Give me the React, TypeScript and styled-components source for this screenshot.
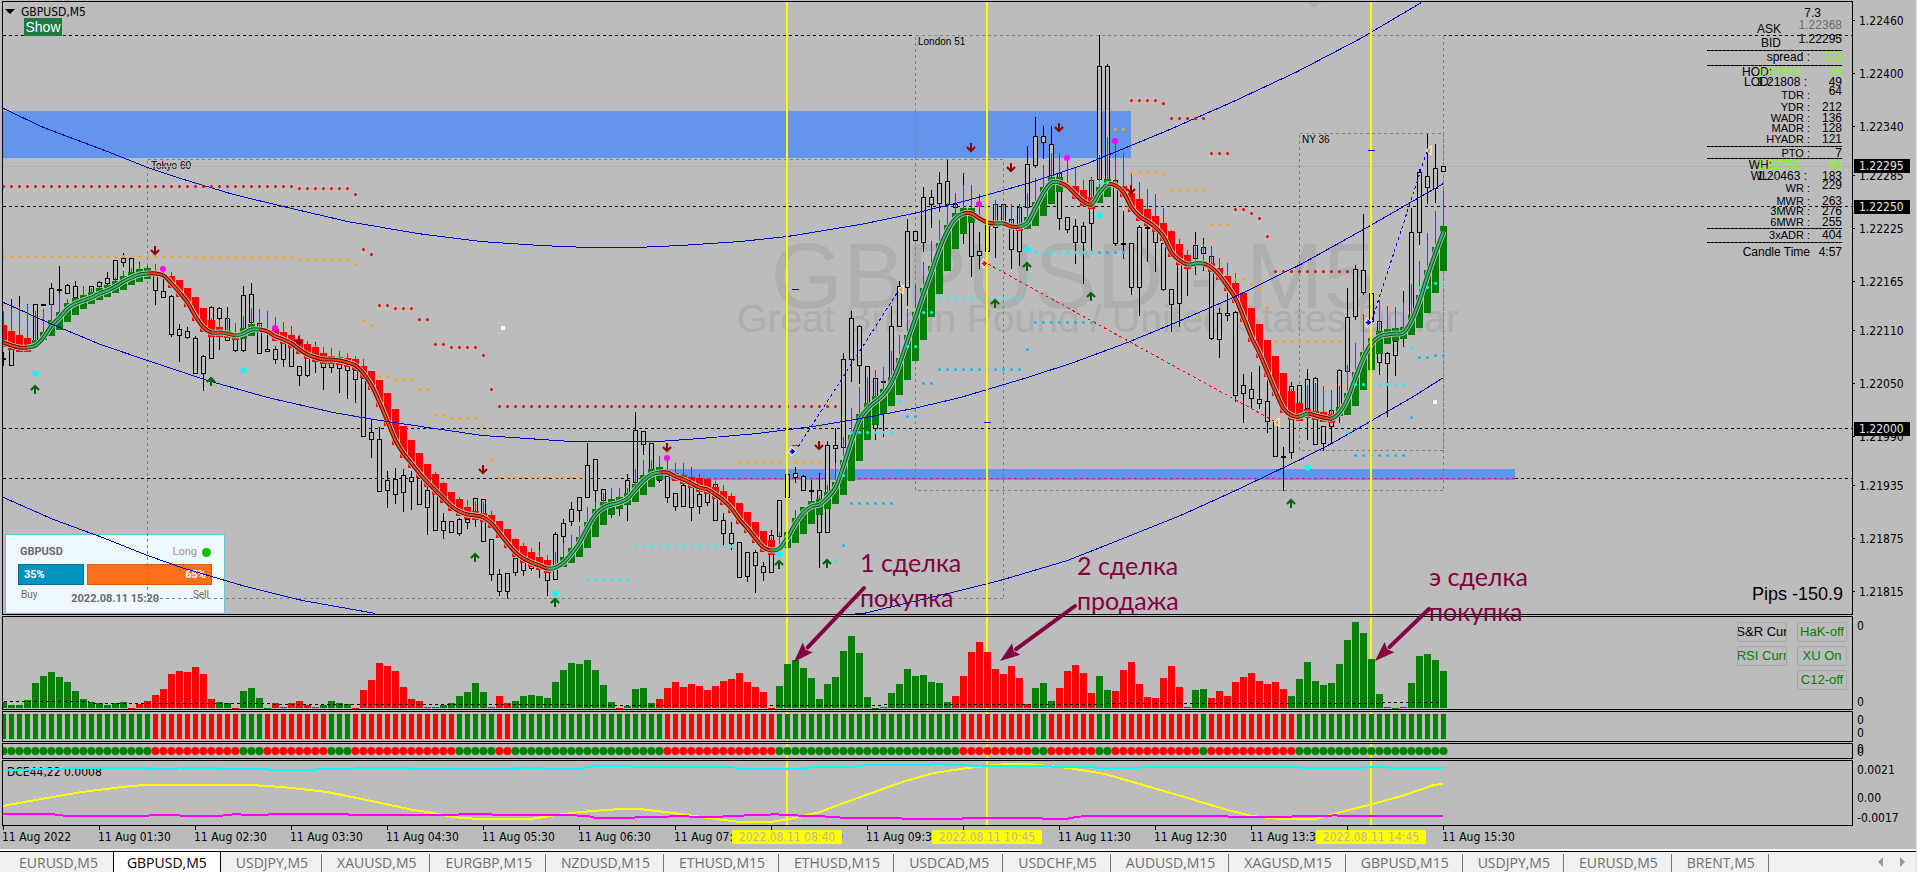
import React from "react";
import styled, { createGlobalStyle, css } from "styled-components";

const BG = "#bcbcbc";
const GREEN = "#008000";
const RED = "#ff0000";
const UI_FONT = '"DejaVu Sans Condensed", "Noto Sans", sans-serif';
const LABEL_FONT = '"Liberation Sans", Arial, sans-serif';

const GlobalStyle = createGlobalStyle`
  * { box-sizing: border-box; }
  body { margin: 0; background: ${BG}; font-family: ${LABEL_FONT}; color: #000; }
`;

/* ---------- data ---------- */

const STEP = 8;
const FIRST = 3;
const xAt = (i: number) => FIRST + i * STEP;

// high, open/close top, open/close bottom, low, trend wick top, direction, trend body edge (0 = none), average
type Bar = [number, number, number, number, number, 1 | -1, number, number];
const BARS: Bar[] = [
  [352, 358, 358, 366, 311, -1, 325, 342], [299, 349, 365, 365, 309, -1, 331, 345], [296, 335, 345, 351, 307, -1, 335, 347],
  [304, 340, 345, 349, 305, -1, 338, 347], [304, 304, 342, 342, 311, 1, 347, 345], [304, 304, 304, 304, 309, 1, 340, 337],
  [283, 288, 304, 304, 304, 1, 336, 325], [266, 289, 289, 293, 293, 1, 330, 317], [284, 285, 293, 293, 299, 1, 322, 308],
  [281, 286, 297, 297, 297, 1, 315, 303], [300, 300, 301, 301, 286, 1, 309, 300], [286, 286, 293, 293, 288, 1, 304, 297],
  [281, 282, 286, 289, 287, 1, 300, 293], [272, 278, 283, 285, 286, 1, 297, 290], [260, 260, 279, 279, 277, 1, 293, 286],
  [253, 258, 262, 267, 271, 1, 290, 281], [258, 258, 274, 274, 268, 1, 285, 277], [262, 269, 271, 275, 263, 1, 282, 274],
  [266, 268, 271, 271, 267, 1, 279, 273], [275, 275, 290, 305, 264, 1, 0, 273], [277, 291, 297, 298, 272, -1, 0, 275],
  [295, 296, 334, 337, 272, -1, 276, 283], [324, 329, 335, 362, 280, -1, 280, 292], [327, 331, 337, 339, 288, -1, 288, 302],
  [336, 338, 373, 374, 297, -1, 297, 316], [355, 356, 373, 391, 308, -1, 308, 327], [306, 307, 358, 358, 318, -1, 320, 332],
  [307, 308, 318, 350, 320, -1, 327, 332], [307, 318, 340, 340, 318, -1, 331, 333], [339, 339, 350, 352, 323, -1, 333, 335],
  [286, 295, 350, 352, 316, 1, 339, 333], [283, 294, 322, 322, 308, 1, 336, 329], [323, 323, 353, 354, 309, 1, 0, 329],
  [335, 349, 351, 351, 311, -1, 0, 331], [346, 349, 359, 364, 317, -1, 329, 336], [343, 343, 359, 367, 322, -1, 332, 339],
  [344, 344, 366, 366, 326, -1, 335, 343], [366, 366, 375, 386, 335, -1, 339, 349], [357, 358, 375, 377, 341, -1, 344, 354],
  [342, 350, 355, 373, 343, -1, 347, 357], [360, 360, 367, 390, 347, -1, 353, 359], [362, 362, 367, 373, 348, -1, 356, 359],
  [362, 362, 368, 393, 351, -1, 357, 360], [366, 366, 370, 399, 353, -1, 358, 362], [356, 370, 379, 403, 356, -1, 359, 365],
  [378, 378, 436, 437, 359, -1, 366, 373], [419, 432, 439, 458, 371, -1, 371, 385], [427, 439, 491, 492, 380, -1, 380, 402],
  [471, 480, 490, 508, 393, -1, 393, 421], [468, 479, 494, 504, 409, -1, 409, 440], [469, 475, 492, 512, 426, -1, 426, 453],
  [471, 477, 481, 510, 440, -1, 440, 463], [476, 478, 504, 504, 453, -1, 453, 473], [480, 490, 507, 535, 464, -1, 464, 482],
  [492, 492, 530, 531, 472, -1, 474, 490], [513, 521, 530, 539, 482, -1, 483, 498], [521, 521, 532, 532, 492, -1, 492, 506],
  [518, 519, 533, 536, 497, -1, 499, 511], [518, 519, 522, 529, 500, -1, 507, 514], [498, 498, 517, 527, 501, -1, 511, 515],
  [499, 499, 541, 541, 502, -1, 513, 517], [539, 539, 574, 581, 511, -1, 515, 523], [569, 574, 591, 596, 521, -1, 521, 533],
  [573, 573, 591, 599, 529, -1, 529, 543], [558, 558, 572, 576, 538, -1, 539, 552], [562, 562, 570, 576, 543, -1, 546, 558],
  [564, 564, 568, 571, 548, -1, 552, 562], [542, 564, 569, 578, 550, -1, 557, 565], [572, 572, 580, 596, 555, -1, 560, 568],
  [532, 534, 579, 579, 552, -1, 0, 567], [519, 523, 536, 544, 543, 1, 567, 562], [502, 509, 521, 526, 535, 1, 563, 553],
  [497, 497, 510, 522, 526, 1, 557, 542], [443, 465, 497, 497, 507, 1, 548, 527], [459, 459, 490, 503, 502, 1, 537, 514],
  [489, 489, 500, 500, 493, 1, 525, 507], [499, 499, 500, 518, 488, 1, 515, 504], [499, 499, 500, 516, 488, 1, 509, 502],
  [474, 480, 498, 521, 488, 1, 505, 498], [412, 430, 482, 482, 469, 1, 502, 489], [431, 431, 444, 455, 460, 1, 495, 480],
  [443, 443, 469, 469, 460, 1, 487, 474], [468, 468, 480, 483, 456, 1, 480, 472], [476, 476, 497, 503, 457, 1, 0, 472],
  [493, 493, 506, 511, 463, -1, 473, 476], [483, 485, 506, 506, 463, -1, 475, 479], [484, 484, 507, 521, 467, -1, 477, 483],
  [492, 494, 506, 514, 474, -1, 478, 487], [482, 483, 502, 506, 478, -1, 479, 489], [483, 484, 520, 521, 481, -1, 487, 494],
  [513, 520, 533, 546, 485, -1, 491, 500], [522, 533, 543, 550, 493, -1, 496, 508], [542, 542, 577, 578, 503, -1, 503, 519],
  [552, 552, 576, 582, 512, -1, 512, 528], [550, 552, 565, 593, 522, -1, 522, 538], [562, 566, 572, 581, 531, -1, 531, 547],
  [530, 535, 572, 572, 537, -1, 540, 550], [500, 500, 536, 540, 532, -1, 0, 548], [474, 474, 497, 497, 523, 1, 548, 537],
  [467, 473, 477, 483, 510, 1, 543, 523], [475, 476, 490, 491, 509, 1, 534, 512], [480, 490, 490, 502, 502, 1, 524, 506],
  [473, 490, 532, 568, 495, 1, 515, 504], [441, 445, 532, 532, 485, 1, 509, 497], [428, 445, 448, 473, 463, 1, 504, 487],
  [353, 359, 447, 447, 437, 1, 495, 465], [311, 318, 359, 382, 408, 1, 481, 440], [325, 326, 365, 384, 387, 1, 461, 419],
  [366, 366, 413, 413, 377, 1, 440, 408], [378, 378, 428, 440, 370, 1, 425, 401], [380, 381, 381, 437, 367, 1, 414, 394],
  [306, 326, 380, 380, 351, 1, 406, 382], [281, 286, 326, 326, 335, 1, 395, 363], [219, 231, 287, 306, 309, 1, 380, 340],
  [231, 231, 240, 240, 285, 1, 361, 317], [187, 197, 242, 252, 262, 1, 340, 293], [190, 197, 204, 228, 241, 1, 317, 271],
  [172, 183, 203, 212, 220, 1, 294, 248], [160, 181, 204, 204, 203, 1, 271, 230], [204, 204, 207, 210, 193, 1, 249, 218],
  [173, 209, 213, 244, 185, 1, 234, 213], [217, 217, 256, 277, 185, 1, 223, 213], [232, 251, 255, 269, 194, -1, 0, 218],
  [220, 220, 251, 251, 215, -1, 0, 222], [204, 204, 227, 258, 200, -1, 0, 223], [204, 204, 225, 225, 204, -1, 0, 223],
  [219, 219, 249, 269, 204, -1, 0, 226], [204, 207, 251, 266, 205, -1, 226, 226], [146, 164, 207, 207, 193, 1, 229, 222],
  [117, 136, 165, 168, 178, 1, 226, 207], [126, 136, 142, 159, 165, 1, 216, 192], [126, 144, 175, 175, 153, 1, 204, 182],
  [173, 173, 218, 230, 153, 1, 192, 182], [217, 217, 229, 233, 161, 1, 0, 186], [219, 226, 242, 264, 168, -1, 186, 194],
  [222, 226, 242, 284, 180, -1, 190, 201], [177, 180, 223, 251, 178, -1, 197, 204], [35, 66, 179, 179, 155, 1, 203, 192],
  [64, 66, 180, 180, 137, 1, 197, 184], [180, 180, 243, 246, 143, 1, 0, 185], [211, 243, 243, 259, 153, -1, 186, 192],
  [243, 243, 287, 295, 172, -1, 193, 207], [225, 227, 287, 316, 182, -1, 199, 216], [225, 227, 227, 262, 189, -1, 209, 221],
  [227, 227, 242, 272, 194, -1, 216, 227], [243, 243, 289, 291, 208, -1, 223, 236], [289, 289, 304, 332, 230, -1, 231, 252],
  [263, 263, 303, 327, 239, -1, 244, 260], [266, 266, 268, 296, 250, -1, 255, 264], [232, 245, 258, 275, 244, -1, 0, 263],
  [238, 247, 253, 271, 244, 1, 0, 263], [256, 256, 338, 340, 246, -1, 263, 267], [308, 313, 339, 358, 258, -1, 268, 275],
  [293, 313, 315, 321, 263, -1, 276, 286], [311, 312, 395, 402, 273, -1, 283, 298], [374, 385, 393, 423, 293, -1, 293, 317],
  [372, 389, 398, 409, 308, -1, 308, 337], [366, 399, 403, 409, 324, -1, 324, 353], [379, 401, 421, 433, 340, -1, 340, 372],
  [422, 422, 456, 456, 356, -1, 356, 391], [447, 456, 456, 491, 373, -1, 373, 408], [382, 386, 452, 459, 389, -1, 391, 415],
  [385, 385, 413, 413, 401, -1, 403, 416], [369, 379, 408, 440, 385, -1, 409, 413], [377, 378, 444, 444, 383, -1, 411, 415],
  [426, 426, 443, 451, 386, -1, 412, 417], [410, 410, 426, 444, 390, -1, 414, 418], [369, 370, 413, 423, 386, 1, 416, 412],
  [288, 317, 371, 371, 365, 1, 415, 398], [265, 269, 316, 320, 343, 1, 406, 377], [214, 270, 292, 295, 314, 1, 390, 357],
  [293, 293, 321, 321, 337, 1, 370, 343], [321, 321, 362, 375, 300, 1, 354, 336], [352, 353, 363, 417, 306, 1, 344, 334],
  [341, 341, 355, 376, 307, 1, 341, 333], [291, 330, 336, 347, 302, 1, 339, 332], [208, 232, 317, 317, 284, 1, 335, 320],
  [169, 172, 232, 245, 261, 1, 328, 300], [134, 176, 187, 204, 233, 1, 313, 275], [144, 168, 188, 203, 211, 1, 293, 252],
  [166, 166, 171, 171, 191, 1, 271, 231],
];

// [first bar, last bar, rising]
const AVERAGE_RUNS: [number, number, boolean][] = [
  [0, 3, false], [3, 18, true], [18, 26, false], [26, 29, false], [29, 32, true], [32, 68, false], [68, 82, true],
  [82, 96, false], [96, 120, true], [120, 124, false], [124, 125, true], [125, 127, false], [127, 132, true],
  [132, 136, false], [136, 138, true], [138, 148, false], [148, 150, true], [150, 162, false], [162, 163, true],
  [163, 166, false], [166, 180, true],
];

// [first bar, last bar, y]
type Dots = [number, number, number][];
const RED_DOTS: Dots = [
  [0, 36, 186], [37, 43, 188], [44, 44, 194], [45, 45, 249], [46, 46, 254], [47, 48, 305], [49, 51, 308], [52, 53, 319],
  [54, 55, 344], [56, 59, 347], [60, 60, 355], [61, 61, 389], [62, 104, 406], [141, 144, 100], [145, 145, 103],
  [146, 150, 118], [151, 153, 153], [154, 155, 209], [156, 156, 213], [157, 157, 218], [158, 158, 236], [159, 168, 271],
];
const ORANGE_DOTS: Dots = [
  [0, 23, 256], [24, 36, 257], [37, 43, 259], [44, 44, 264], [45, 45, 320], [46, 46, 325], [47, 48, 376], [49, 51, 379],
  [52, 53, 389], [54, 55, 415], [56, 59, 418], [60, 60, 426], [61, 61, 459], [62, 72, 477], [92, 102, 462],
  [139, 140, 129], [141, 144, 172], [145, 145, 174], [146, 150, 190], [151, 153, 224], [154, 155, 279], [156, 156, 284],
  [157, 157, 288], [158, 158, 307], [159, 167, 341],
];
const CYAN_DOTS: Dots = [
  [73, 78, 579], [79, 91, 546], [103, 104, 560], [105, 105, 475], [106, 111, 432], [112, 112, 401], [113, 114, 346],
  [115, 116, 312], [117, 127, 298], [128, 128, 278], [129, 136, 252], [137, 138, 182], [168, 168, 432], [169, 175, 384],
  [176, 176, 347], [177, 178, 287], [179, 180, 283],
];
const SKY_DOTS: Dots = [
  [105, 105, 545], [106, 111, 503], [112, 112, 471], [113, 114, 416], [115, 116, 383], [117, 127, 369], [128, 128, 349],
  [129, 136, 322], [137, 140, 252], [169, 175, 455], [176, 176, 417], [177, 178, 357], [179, 180, 355],
];

type Pt = [number, number];
const CYAN_MARKS: Pt[] = [[35, 373], [243, 370], [555, 593], [779, 554], [1027, 249], [1099, 215], [1307, 467]];
const MAGENTA_MARKS: Pt[] = [[163, 269], [275, 328], [667, 458], [979, 204], [1067, 158], [1115, 141]];
const DOWN_ARROWS: Pt[] = [[155, 250], [299, 340], [483, 469], [667, 447], [819, 445], [971, 147], [1011, 167], [1059, 127], [1131, 189]];
const UP_ARROWS: Pt[] = [[35, 389], [211, 381], [475, 557], [555, 602], [779, 564], [827, 563], [1027, 266], [995, 303], [1091, 296], [1291, 503]];

const BANDS: Pt[][] = [
  [[3, 108], [43, 127], [75, 139], [107, 151], [147, 167], [180, 178], [233, 194], [287, 207], [347, 221], [417, 233], [480, 241], [540, 245], [587, 247], [635, 247], [680, 245], [740, 241], [787, 236], [860, 224], [913, 213], [963, 201], [1027, 183], [1087, 163], [1167, 130], [1233, 101], [1297, 71], [1360, 38], [1421, 2]],
  [[3, 302], [52, 324], [100, 344], [147, 360], [207, 380], [267, 397], [333, 412], [373, 419], [434, 428], [482, 435], [571, 441], [657, 441], [700, 438], [757, 433], [813, 426], [860, 418], [913, 408], [960, 397], [1027, 377], [1073, 362], [1127, 342], [1173, 323], [1233, 297], [1300, 264], [1363, 229], [1443, 183]],
  [[3, 497], [53, 519], [102, 537], [147, 555], [184, 568], [245, 586], [302, 600], [375, 613]],
  [[847, 614], [863, 613], [913, 601], [960, 590], [1003, 579], [1067, 560], [1120, 539], [1180, 515], [1233, 491], [1300, 459], [1333, 442], [1380, 415], [1413, 396], [1443, 377]],
];

const HIST: number[] = [
  6, 3, 3, 8, 25, 32, 36, 31, 26, 17, 9, 6, 5, 3, 5, 6, -1, 4, 7, 13, 19, 34, 37, 36, 41, 34, 9, 6, 5, -1,
  17, 20, 10, -1, 5, 1, 5, 7, 3, 1, 3, 7, 5, 4, -1, 18, 28, 45, 42, 37, 21, 9, 7, 1, 1, 3, 5, 12, 16, 25,
  16, 1, 12, 5, 7, 12, 13, 12, 10, 26, 38, 45, 44, 48, 38, 23, 6, -1, 2, 19, 20, 5, 9, 20, 26, 21, 24, 22, 18, 22,
  27, 29, 35, 26, 21, 16, -1, 22, 44, 48, 40, 30, 9, 24, 31, 57, 72, 55, 11, -1, 1, 15, 24, 39, 32, 33, 26, 25, 6, 12,
  32, 56, 66, 56, 39, 34, 42, 30, 4, 20, 25, 7, 20, 37, 43, 35, 15, 32, 18, 17, 38, 46, 24, 11, 10, 30, 42, 21, 1, 18,
  19, 10, 17, 12, 26, 31, 35, 27, 24, 26, 19, 12, 29, 46, 27, 23, 25, 44, 68, 86, 75, 49, 14, 1, -1, 1, 25, 52, 54, 48, 37,
];
const HIST_RED: Pt[] = [[16, 26], [29, 29], [34, 38], [44, 52], [54, 54], [62, 63], [77, 77], [82, 96], [110, 110], [119, 128], [132, 136], [139, 147], [151, 160]];
const STATE_RED: Pt[] = [[19, 29], [33, 40], [44, 56], [62, 63], [83, 96], [120, 128], [131, 136], [139, 149], [151, 161]];
const inRuns = (runs: Pt[], i: number) => runs.some(([a, b]) => i >= a && i <= b);

const HIST_AVG: Pt[] = [[3, 701], [88, 701], [90, 703], [270, 703], [275, 704], [570, 704], [575, 705], [880, 705], [885, 704], [1100, 704], [1105, 703], [1380, 703], [1385, 702], [1440, 702]];
const DCE_CYAN: Pt[] = [[3, 770], [61, 769], [68, 768], [145, 768], [149, 769], [176, 769], [182, 768], [216, 768], [222, 769], [265, 769], [270, 770], [314, 770], [318, 769], [388, 768], [408, 768], [414, 769], [514, 769], [520, 768], [539, 768], [545, 769], [580, 769], [588, 767], [596, 766], [624, 766], [640, 767], [732, 767], [740, 769], [803, 769], [813, 767], [850, 767], [869, 765], [926, 765], [934, 764], [958, 765], [983, 766], [1044, 766], [1060, 767], [1093, 767], [1097, 768], [1140, 768], [1142, 767], [1298, 767], [1300, 768], [1363, 768], [1365, 767], [1387, 767], [1388, 768], [1443, 768]];
const DCE_YELLOW: Pt[] = [[3, 806], [41, 799], [82, 792], [122, 787], [143, 785], [251, 785], [282, 787], [327, 792], [367, 800], [408, 809], [433, 813], [453, 817], [478, 819], [531, 819], [563, 814], [592, 811], [620, 809], [640, 809], [673, 813], [701, 817], [740, 822], [771, 822], [795, 818], [820, 812], [844, 803], [877, 791], [905, 781], [934, 773], [967, 768], [995, 765], [1007, 764], [1028, 764], [1069, 768], [1105, 774], [1150, 787], [1191, 799], [1224, 809], [1252, 816], [1280, 819], [1315, 819], [1341, 812], [1369, 805], [1402, 796], [1434, 785], [1443, 784]];
const DCE_MAGENTA: Pt[] = [[3, 814], [51, 814], [67, 816], [147, 816], [151, 815], [178, 815], [182, 816], [218, 816], [237, 814], [245, 815], [267, 815], [270, 814], [347, 814], [350, 815], [457, 815], [461, 814], [490, 814], [494, 815], [566, 815], [588, 816], [596, 818], [630, 818], [640, 817], [667, 817], [671, 816], [707, 817], [740, 816], [748, 815], [768, 815], [774, 814], [784, 815], [838, 817], [842, 818], [900, 818], [904, 819], [960, 819], [965, 818], [1040, 818], [1045, 819], [1066, 819], [1076, 817], [1086, 816], [1226, 816], [1230, 817], [1290, 817], [1294, 816], [1330, 816], [1334, 815], [1340, 816], [1443, 816]];

const DEAL_TIMES = [786, 986, 1370];

const SCALE: [string, number][] = [
  ["1.22460", 20], ["1.22400", 73], ["1.22340", 126], ["1.22285", 175], ["1.22225", 228], ["1.22165", 281], ["1.22110", 330],
  ["1.22050", 383], ["1.21990", 436], ["1.21935", 485], ["1.21875", 538], ["1.21815", 591],
];
const LEVELS: [string, number][] = [["1.22295", 159], ["1.22250", 200], ["1.22000", 422]];

// text, centre y, distance from the right edge, colour
const NAMES: [string, number, number?, string?][] = [
  ["ASK", 29, 71], ["BID", 43, 71], ["spread :", 57], ["HOD:", 72, 80], ["1.22443 :", 72, 45, "#7fff00"], ["LOD:", 82, 80],
  ["1.21808 :", 82, 45], ["TDR :", 95], ["YDR :", 107], ["WADR :", 118], ["MADR :", 128], ["HYADR :", 139], ["PTO :", 153],
  ["WH:", 165, 80], ["1.22752 :", 165, 45, "#7fff00"], ["WL:", 176, 80], ["1.20463 :", 176, 45], ["WR :", 188], ["MWR :", 201],
  ["3MWR :", 211], ["6MWR :", 222], ["3xADR :", 235], ["Candle Time", 252],
];
const VALUES: [string, number, number?, string?][] = [
  ["7.3", 13, 31], ["1.22368", 25, 10, "#6a6a6a"], ["1.22295", 39], ["7.3", 57, 10, "#7fff00"], ["15", 72, 10, "#7fff00"], ["49", 82],
  ["64", 91], ["212", 107], ["136", 118], ["128", 128], ["121", 139], ["7", 153], ["46", 165, 10, "#7fff00"], ["183", 176],
  ["229", 185], ["263", 201], ["276", 211], ["255", 222], ["404", 235], ["4:57", 252],
];
const RULES = [50, 65, 146, 158, 228, 242];

const HOURS = ["2022", "01:30", "02:30", "03:30", "04:30", "05:30", "06:30", "07:30", "08:30", "09:30", "10:30", "11:30", "12:30", "13:30", "14:30", "15:30"];
const TIME_BADGES: [string, number][] = [["2022.08.11 08:40", 732], ["2022.08.11 10:45", 932], ["2022.08.11 14:45", 1316]];

const TABS = ["EURUSD,M5", "GBPUSD,M5", "USDJPY,M5", "XAUUSD,M5", "EURGBP,M15", "NZDUSD,M15", "ETHUSD,M15", "ETHUSD,M15", "USDCAD,M5", "USDCHF,M5", "AUDUSD,M15", "XAGUSD,M15", "GBPUSD,M15", "USDJPY,M5", "EURUSD,M5", "BRENT,M5"];

/* ---------- layout ---------- */

const Window = styled.main`
  display: flex;
  flex-direction: column;
  min-height: 100vh;
  background: ${BG};
  border-right: 1px solid #dcdcdc;
  overflow: hidden;
`;

const Workspace = styled.section`
  position: relative;
  flex: 1;
  display: flex;
  flex-direction: column;
  gap: 1px;
  padding: 1px 0 0 2px;
`;

const PaneRow = styled.div`
  display: grid;
  grid-template-columns: minmax(0, 1fr) 63px;
`;

const Plot = styled.div<{ $height: number }>`
  position: relative;
  border: 1px solid #000;
  height: ${(p) => p.$height}px;
  overflow: hidden;
`;

const Canvas = styled.svg`
  display: block;
  width: 100%;
  height: 100%;
  position: relative;
  pointer-events: none;
`;

const Scale = styled.svg`
  display: block;
  width: 100%;
  height: 0;
  min-height: 100%;
  overflow: visible;
  font: 12px ${UI_FONT};
`;

const PlotTitle = styled.h1`
  position: absolute;
  left: 2px;
  top: 2px;
  margin: 0;
  display: flex;
  align-items: center;
  gap: 6px;
  font: 12px/16px ${UI_FONT};
`;

const ShowButton = styled.button`
  position: absolute;
  left: 21px;
  top: 16px;
  width: 38px;
  height: 18px;
  padding: 0;
  border: 0;
  background: #1c7a43;
  color: #fff;
  font: 14px/18px ${LABEL_FONT};
`;

const ChartLabel = styled.span<{ $top: number; $right: number; $color?: string; $size?: number }>`
  position: absolute;
  top: ${(p) => p.$top}px;
  right: ${(p) => p.$right}px;
  color: ${(p) => p.$color ?? "#000"};
  font: ${(p) => p.$size ?? 12}px/14px ${LABEL_FONT};
  white-space: pre;
`;

const Rule = styled.hr<{ $top: number }>`
  position: absolute;
  top: ${(p) => p.$top}px;
  right: 10px;
  width: 135px;
  height: 1px;
  margin: 0;
  border: 0;
  background: repeating-linear-gradient(90deg, #000 0 3px, #5a4a3a 3px 4px);
`;

const SwitchGrid = styled.div`
  position: absolute;
  top: 5px;
  right: 5px;
  display: grid;
  grid-template-columns: 50px 50px;
  gap: 4px 10px;
`;

const SwitchButton = styled.button<{ $dark?: boolean; $second?: boolean }>`
  height: 20px;
  padding: 0;
  display: flex;
  justify-content: center;
  border: 1px solid #a6a6a6;
  border-radius: 2px;
  background: ${BG};
  color: ${(p) => (p.$dark ? "#000" : GREEN)};
  font: 13px/18px ${LABEL_FONT};
  white-space: nowrap;
  overflow: hidden;
  ${(p) => p.$second && css`grid-column: 2;`}
`;

/* ---------- sentiment card ---------- */

const Card = styled.aside`
  position: absolute;
  left: 2px;
  bottom: 0;
  width: 220px;
  height: 80px;
  padding: 10px 12px 0;
  border: 1px solid #58cbe6;
  background: #eef8ff;
  color: #6a6a6a;
  font: 11px/14px Roboto, sans-serif;
`;
const CardRow = styled.div`
  display: flex;
  justify-content: space-between;
  align-items: center;
`;
const CardName = styled.strong`
  padding-left: 2px;
  font-weight: 700;
`;
const Bias = styled.span`
  display: flex;
  align-items: center;
  gap: 5px;
  padding-right: 1px;
  color: #a8a8a8;
  font-weight: 500;
  &::after {
    content: "";
    width: 9px;
    height: 9px;
    border-radius: 50%;
    background: #00c000;
  }
`;
const Gauge = styled.div`
  display: grid;
  grid-template-columns: 35fr 66fr;
  gap: 3px;
  margin-top: 5px;
`;
const Share = styled.span<{ $sell?: boolean }>`
  height: 21px;
  padding: 0 5px;
  border: 1px solid ${(p) => (p.$sell ? "#d9590c" : "#00709a")};
  background: ${(p) => (p.$sell ? "#ff6f1a" : "#0092c0")};
  color: #fff;
  font-weight: 700;
  line-height: 19px;
  text-align: ${(p) => (p.$sell ? "right" : "left")};
`;
const CardFoot = styled(CardRow)`
  align-items: flex-start;
  padding: 3px 3px 0;
  font-size: 10px;
`;
const CardDate = styled.time`
  padding-top: 4px;
  font: 700 11px/14px Roboto, sans-serif;
`;

/* ---------- time axis and tabs ---------- */

const TimeAxis = styled.div`
  position: relative;
  display: flex;
  flex: none;
  height: 22px;
  margin-top: -1px;
  overflow: hidden;
  font: 12px/22px ${UI_FONT};
`;
const Hour = styled.span`
  flex: 0 0 96px;
  white-space: nowrap;
  background: linear-gradient(#000, #000) 1px 0 / 1px 4px no-repeat;
`;
const TimeBadge = styled.time<{ $left: number }>`
  position: absolute;
  left: ${(p) => p.$left - 2}px;
  top: 4px;
  width: 110px;
  height: 14px;
  background: #ffff00;
  color: #b9b994;
  line-height: 14px;
  text-align: center;
`;

const TabBar = styled.nav`
  display: flex;
  flex: none;
  align-items: center;
  gap: 1px;
  height: 23px;
  background: #f0f0f0;
  border-top: 2px solid #fafafa;
  box-shadow: inset 0 1px 0 #000;
  padding-left: 5px;
  overflow: hidden;
  font: 14px/22px "Open Sans", "Noto Sans", sans-serif;
`;
const Tab = styled.a<{ $active?: boolean; $divided?: boolean }>`
  height: 20px;
  margin-top: 1px;
  padding: 0 14px;
  position: relative;
  color: #6d6d6d;
  text-decoration: none;
  white-space: nowrap;
  ${(p) =>
    p.$divided &&
    css`
      &::after {
        content: "";
        position: absolute;
        right: 0;
        top: 2px;
        width: 1px;
        height: 18px;
        background: #777;
      }
    `}
  ${(p) =>
    p.$active &&
    css`
      padding: 0 13px;
      background: #fff;
      color: #000;
      border-left: 1px solid #000;
      border-right: 1px solid #000;
    `}
`;
const TabScroll = styled.div`
  margin-left: auto;
  display: flex;
  gap: 14px;
  padding-right: 8px;
`;
const ScrollButton = styled.button`
  width: 8px;
  height: 20px;
  padding: 0;
  border: 0;
  background: none;
  display: flex;
  align-items: center;
`;

const Notes = styled.svg`
  position: absolute;
  inset: 0;
  width: 100%;
  height: 100%;
  pointer-events: none;
  overflow: visible;
`;

/* ---------- drawing pieces ---------- */

const poly = (pts: Pt[]) => pts.map((p) => p.join(",")).join(" ");

const DotRuns = ({ runs, color }: { runs: Dots; color: string }) => (
  <g fill={color}>
    {runs.flatMap(([a, b, y]) =>
      Array.from({ length: b - a + 1 }, (_, k) => <circle key={`${a}-${k}-${y}`} cx={xAt(a + k) + 0.5} cy={y + 0.5} r={1.5} />),
    )}
  </g>
);

const DealLines = ({ from, to }: { from: number; to: number }) => (
  <g fill="#ffff00">
    {DEAL_TIMES.map((x) => (
      <rect key={x} x={x} y={from} width={2} height={to - from} />
    ))}
  </g>
);

const SessionBox = ({ x, y, right, bottom }: { x: number; y: number; right: number; bottom: number }) => (
  <rect x={x + 0.5} y={y + 0.5} width={right - x} height={bottom - y} fill="none" stroke="#808080" strokeDasharray="3 3" shapeRendering="crispEdges" />
);

const Candles = () => (
  <g shapeRendering="crispEdges">
    {BARS.map(([hi, top, bot, lo], i) => {
      const x = xAt(i);
      return (
        <g key={i}>
          <rect x={x} y={hi} width={1} height={Math.max(lo - hi, 1)} />
          {bot - top < 2 ? (
            <rect x={x - 2} y={top} width={5} height={2} />
          ) : (
            <rect x={x - 1.5} y={top + 0.5} width={4} height={bot - top} fill={BG} stroke="#000" />
          )}
        </g>
      );
    })}
  </g>
);

const TrendBars = () => (
  <g shapeRendering="crispEdges">
    {BARS.map(([, , , , wick, dir, edge, avg], i) => {
      const top = dir > 0 ? avg - 5 : edge;
      const bottom = dir > 0 ? edge : avg + 5;
      return (
        <g key={i} fill={dir > 0 ? GREEN : RED}>
          <rect x={xAt(i)} y={wick} width={1} height={Math.max(avg - wick, 1)} />
          {edge > 0 && <rect x={xAt(i) - 3} y={top} width={7} height={Math.max(bottom - top, 1)} />}
        </g>
      );
    })}
  </g>
);

const smooth = (a: number, b: number) => {
  const p = (i: number): Pt => {
    const k = Math.min(Math.max(i, 0), BARS.length - 1);
    return [xAt(k) + 0.5, BARS[k][7] + 0.5];
  };
  let d = `M${p(a).join(",")}`;
  for (let i = a; i < b; i++) {
    const [x0, y0] = p(i - 1);
    const [x1, y1] = p(i);
    const [x2, y2] = p(i + 1);
    const [x3, y3] = p(i + 2);
    d += ` C${x1 + (x2 - x0) / 6},${y1 + (y2 - y0) / 6} ${x2 - (x3 - x1) / 6},${y2 - (y3 - y1) / 6} ${x2},${y2}`;
  }
  return d;
};

const Average = () => (
  <g fill="none" strokeLinejoin="round">
    <path d={smooth(0, BARS.length - 1)} stroke={BG} strokeWidth={6} />
    {AVERAGE_RUNS.map(([a, b, up]) => (
      <path key={a} d={smooth(a, b)} stroke={up || a === 26 ? "#005a1c" : "#5c0000"} strokeWidth={4} />
    ))}
    {AVERAGE_RUNS.map(([a, b, up]) => (
      <path key={a} d={smooth(a, b)} stroke={up ? "#3cb371" : "#ff4500"} strokeWidth={2} />
    ))}
  </g>
);

const DownArrow = ({ at: [x, y] }: { at: Pt }) => (
  <path d={`M${x},${y - 4}V${y + 4}M${x - 4},${y}L${x},${y + 4}L${x + 4},${y}`} stroke="#8b0000" strokeWidth={2} fill="none" />
);
const UpArrow = ({ at: [x, y] }: { at: Pt }) => (
  <path d={`M${x},${y + 5}V${y - 3}M${x - 4},${y + 1}L${x},${y - 3}L${x + 4},${y + 1}`} stroke="#006400" strokeWidth={2} fill="none" />
);
const ExitMark = ({ at: [x, y] }: { at: Pt }) => (
  <path d={`M${x - 3},${y + 0.5}L${x + 2},${y - 4}V${y + 5}Z`} fill="#daa520" stroke="#fff" strokeWidth={1} />
);
const EntryMark = ({ at: [x, y], color }: { at: Pt; color: string }) => (
  <path d={`M${x - 3},${y - 1}H${x - 1}V${y - 4}L${x + 4},${y + 0.5}L${x - 1},${y + 5}V${y + 2}H${x - 3}Z`} fill={color} stroke="#fff" />
);

const PricePlot = () => (
  <Canvas aria-label="GBPUSD five minute price chart">
    <g transform="translate(-3 -2)">
      <path d="M1307,2h14l-7,6z" fill="#adadad" />
      <g fill="#aeaeae" fontFamily={LABEL_FONT} textAnchor="middle">
        <text x={1073} y={308} fontSize={93}>GBPUSD - M5</text>
        <text x={1098} y={332} fontSize={39}>Great Britain Pound / United States Dollar</text>
      </g>
      <g shapeRendering="crispEdges" stroke="#000" strokeDasharray="3 3">
        {[35, 206, 428, 478].map((y) => (
          <line key={y} x1={3} x2="101%" y1={y + 0.5} y2={y + 0.5} />
        ))}
      </g>
      <rect x={3} y={111} width={1128} height={47} fill="#6495ed" />
      <rect x={660} y={469} width={855} height={11} fill="#6495ed" />
      <line x1={660} x2={1515} y1={478.5} y2={478.5} stroke="#c8285a" strokeDasharray="3 3" shapeRendering="crispEdges" />
      <g fontFamily={LABEL_FONT} fontSize={10}>
        <text x={151} y={169}>Tokyo 60</text>
        <text x={918} y={45}>London 51</text>
        <text x={1302} y={143}>NY 36</text>
      </g>
      <rect x={3} y={166} width="100%" height={1} fill="#b0b0b0" />
      <rect x={915} y={35} width={529} height={1} fill={BG} />
      <SessionBox x={147} y={159} right={1003} bottom={598} />
      <SessionBox x={915} y={35} right={1443} bottom={490} />
      <SessionBox x={1299} y={133} right={1443} bottom={450} />
      <Candles />
      <TrendBars />
      <Average />
      <g fill="none" stroke="#0000cd" strokeWidth={1} shapeRendering="crispEdges">
        {BANDS.map((b, i) => (
          <polyline key={i} points={poly(b)} transform="translate(0.5 0.5)" />
        ))}
      </g>
      <DotRuns runs={RED_DOTS} color={RED} />
      <DotRuns runs={ORANGE_DOTS} color="#ffa500" />
      <DotRuns runs={CYAN_DOTS} color="#00ffff" />
      <DotRuns runs={SKY_DOTS} color="#00bfff" />
      <DealLines from={2} to={614} />
      {CYAN_MARKS.map(([x, y]) => <circle key={x} cx={x + 0.5} cy={y + 0.5} r={3} fill="#00ffff" />)}
      {MAGENTA_MARKS.map(([x, y]) => <circle key={x} cx={x} cy={y} r={3} fill="#ff00ff" />)}
      {DOWN_ARROWS.map((p) => <DownArrow key={p[0]} at={p} />)}
      {UP_ARROWS.map((p) => <UpArrow key={p[0]} at={p} />)}
      <g fill="#fff">
        <rect x={501} y={326} width={4} height={4} />
        <rect x={1433} y={400} width={4} height={4} />
      </g>
      <g fill="#0000ff">
        <rect x={792} y={289} width={7} height={1} />
        <rect x={984} y={422} width={7} height={1} />
        <rect x={1368} y={150} width={7} height={1} />
      </g>
      <rect x={792} y={445} width={7} height={1} fill={RED} />
      <g strokeDasharray="3 3" fill="none" shapeRendering="crispEdges">
        <path d="M798,447L899,290M1372,320L1427,151" stroke="#0000ff" />
        <path d="M988,264L1274,421" stroke="#ff0000" />
      </g>
      <EntryMark at={[792, 451]} color="#0000ff" />
      <EntryMark at={[984, 263]} color="#ff0000" />
      <EntryMark at={[1368, 322]} color="#0000ff" />
      <ExitMark at={[901, 289]} />
      <ExitMark at={[1277, 422]} />
      <ExitMark at={[1429, 150]} />
    </g>
  </Canvas>
);

const Ticks = ({ at }: { at: number[] }) => (
  <>
    {at.map((y) => <rect key={y} x={0} y={y} width={2} height={1} />)}
  </>
);

const SmallScale = ({ items }: { items: [string, number][] }) => (
  <Scale>
    {items.map(([t, y]) => (
      <text key={`${t}${y}`} x={4} y={y + 4}>{t}</text>
    ))}
  </Scale>
);

const Arrow = ({ from, tip }: { from: Pt; tip: Pt }) => {
  const dx = tip[0] - from[0];
  const dy = tip[1] - from[1];
  const len = Math.hypot(dx, dy);
  const ux = dx / len;
  const uy = dy / len;
  const bx = tip[0] - ux * 20;
  const by = tip[1] - uy * 20;
  return (
    <g fill="#800040">
      <line x1={from[0]} y1={from[1]} x2={bx} y2={by} stroke="#800040" strokeWidth={4} strokeLinecap="round" />
      <path d={`M${tip.join(",")}L${bx - uy * 7},${by + ux * 7}L${bx + ux * 3},${by + uy * 3}L${bx + uy * 7},${by - ux * 7}Z`} />
    </g>
  );
};

/* ---------- page ---------- */

export default function App() {
  return (
    <Window>
      <GlobalStyle />
      <Workspace>
        <PaneRow>
          <Plot $height={614}>
            <Card aria-label="Trader sentiment">
              <CardRow>
                <CardName>GBPUSD</CardName>
                <Bias>Long</Bias>
              </CardRow>
              <Gauge>
                <Share>35%</Share>
                <Share $sell>65%</Share>
              </Gauge>
              <CardFoot>
                <span>Buy</span>
                <CardDate>2022.08.11 15:20</CardDate>
                <span>Sell</span>
              </CardFoot>
            </Card>
            <PricePlot />
            <PlotTitle>
              <svg width={10} height={6} aria-hidden="true"><path d="M0,0h10l-5,5z" /></svg>
              GBPUSD,M5
            </PlotTitle>
            <ShowButton type="button">Show</ShowButton>
            {NAMES.map(([t, y, right = 42, color]) => (
              <ChartLabel key={t} $top={y - 9} $right={right} $color={color} $size={/^(1\.|ASK|BID|spread|Candle|[HL]OD|W[HL]:)/.test(t) ? 12 : 11}>{t}</ChartLabel>
            ))}
            {VALUES.map(([t, y, right = 10, color]) => (
              <ChartLabel key={`${t}-${y}`} $top={y - 9} $right={right} $color={color}>{t}</ChartLabel>
            ))}
            {RULES.map((y) => <Rule key={y} $top={y - 2} />)}
            <ChartLabel $top={585} $right={9} $size={18}>Pips -150.9</ChartLabel>
          </Plot>
          <Scale>
            <Ticks at={SCALE.map(([, y]) => y - 1)} />
            {SCALE.map(([t, y]) => (
              <text key={t} x={6} y={y + 4}>{t}</text>
            ))}
            {LEVELS.map(([t, y]) => (
              <g key={t}>
                <rect x={1} y={y - 1} width={56} height={14} />
                <text x={6} y={y + 10} fill="#e6e6e6">{t}</text>
              </g>
            ))}
          </Scale>
        </PaneRow>

        <PaneRow>
          <Plot $height={94}>
            <Canvas aria-label="Volume histogram">
              <g transform="translate(-3 -617)" shapeRendering="crispEdges">
                <DealLines from={617} to={709} />
                {HIST.map((h, i) => (
                  <rect key={i} x={xAt(i) - 3} y={h > 0 ? 708 - h : 708} width={7} height={Math.abs(h)} fill={inRuns(HIST_RED, i) ? RED : GREEN} />
                ))}
                <polyline points={poly(HIST_AVG)} transform="translate(0.5 0.5)" fill="none" stroke="#000" strokeDasharray="3 3" />
              </g>
            </Canvas>
            <SwitchGrid>
              <SwitchButton type="button" $dark>S&amp;R Cur</SwitchButton>
              <SwitchButton type="button">HaK-off</SwitchButton>
              <SwitchButton type="button">RSI Curr</SwitchButton>
              <SwitchButton type="button">XU On</SwitchButton>
              <SwitchButton type="button" $second>C12-off</SwitchButton>
            </SwitchGrid>
          </Plot>
          <SmallScale items={[["0", 10], ["0", 86]]} />
        </PaneRow>

        <PaneRow>
          <Plot $height={31}>
            <Canvas aria-label="Trend state bars">
              <g transform="translate(-3 -712)" shapeRendering="crispEdges">
                <DealLines from={712} to={742} />
                {BARS.map((_, i) => (
                  <rect key={i} x={xAt(i) - 2} y={714} width={5} height={25} fill={inRuns(STATE_RED, i) ? RED : GREEN} />
                ))}
              </g>
            </Canvas>
          </Plot>
          <SmallScale items={[["0", 9], ["0", 22]]} />
        </PaneRow>

        <PaneRow>
          <Plot $height={16}>
            <Canvas aria-label="Trend state dots">
              <g transform="translate(-3 -744)">
                <DealLines from={744} to={758} />
                {BARS.map((_, i) => (
                  <circle key={i} cx={xAt(i) + 0.5} cy={751} r={4} fill={inRuns(STATE_RED, i) ? RED : GREEN} />
                ))}
              </g>
            </Canvas>
          </Plot>
          <SmallScale items={[["0", 6], ["0", 9]]} />
        </PaneRow>

        <PaneRow>
          <Plot $height={66}>
            <Canvas aria-label="DCE oscillator">
              <g transform="translate(-3 -761)">
                <text x={7} y={776} fontSize={12} fontFamily={UI_FONT}>DCE44,22 0.0008</text>
                <DealLines from={761} to={825} />
                <g fill="none" strokeWidth={2} shapeRendering="crispEdges">
                  <polyline points={poly(DCE_YELLOW)} stroke="#ffff00" />
                  <polyline points={poly(DCE_CYAN)} stroke="#00ffff" />
                  <polyline points={poly(DCE_MAGENTA)} stroke="#ff00ff" />
                </g>
              </g>
            </Canvas>
          </Plot>
          <SmallScale items={[["0.0021", 10], ["0.00", 38], ["-0.0017", 58]]} />
        </PaneRow>

        <TimeAxis>
          {HOURS.map((h) => <Hour key={h}>11 Aug {h}</Hour>)}
          {TIME_BADGES.map(([t, x]) => <TimeBadge key={t} $left={x}>{t}</TimeBadge>)}
        </TimeAxis>

        <Notes aria-label="Trade notes">
          <g fontFamily='Lato, "Open Sans", sans-serif' fontSize={25} fill="#800040">
            <text x={860} y={572}>1 сделка</text>
            <text x={860} y={607}>покупка</text>
            <text x={1077} y={575}>2 сделка</text>
            <text x={1077} y={610}>продажа</text>
            <text x={1429} y={586}>э сделка</text>
            <text x={1429} y={621}>покупка</text>
          </g>
          <Arrow from={[864, 588]} tip={[794, 662]} />
          <Arrow from={[1075, 606]} tip={[1000, 661]} />
          <Arrow from={[1429, 609]} tip={[1375, 661]} />
        </Notes>
      </Workspace>

      <TabBar aria-label="Open charts">
        {TABS.map((t, i) => (
          <Tab key={i} href={`#chart-${i}`} $active={i === 1} $divided={i > 1} aria-current={i === 1 ? "page" : undefined}>{t}</Tab>
        ))}
        <TabScroll>
          <ScrollButton type="button" aria-label="Scroll tabs left">
            <svg width={6} height={10} aria-hidden="true"><path d="M5,0v10l-5,-5z" fill="#9a9a9a" /></svg>
          </ScrollButton>
          <ScrollButton type="button" aria-label="Scroll tabs right">
            <svg width={6} height={10} aria-hidden="true"><path d="M0,0v10l5,-5z" fill="#9a9a9a" /></svg>
          </ScrollButton>
        </TabScroll>
      </TabBar>
    </Window>
  );
}
